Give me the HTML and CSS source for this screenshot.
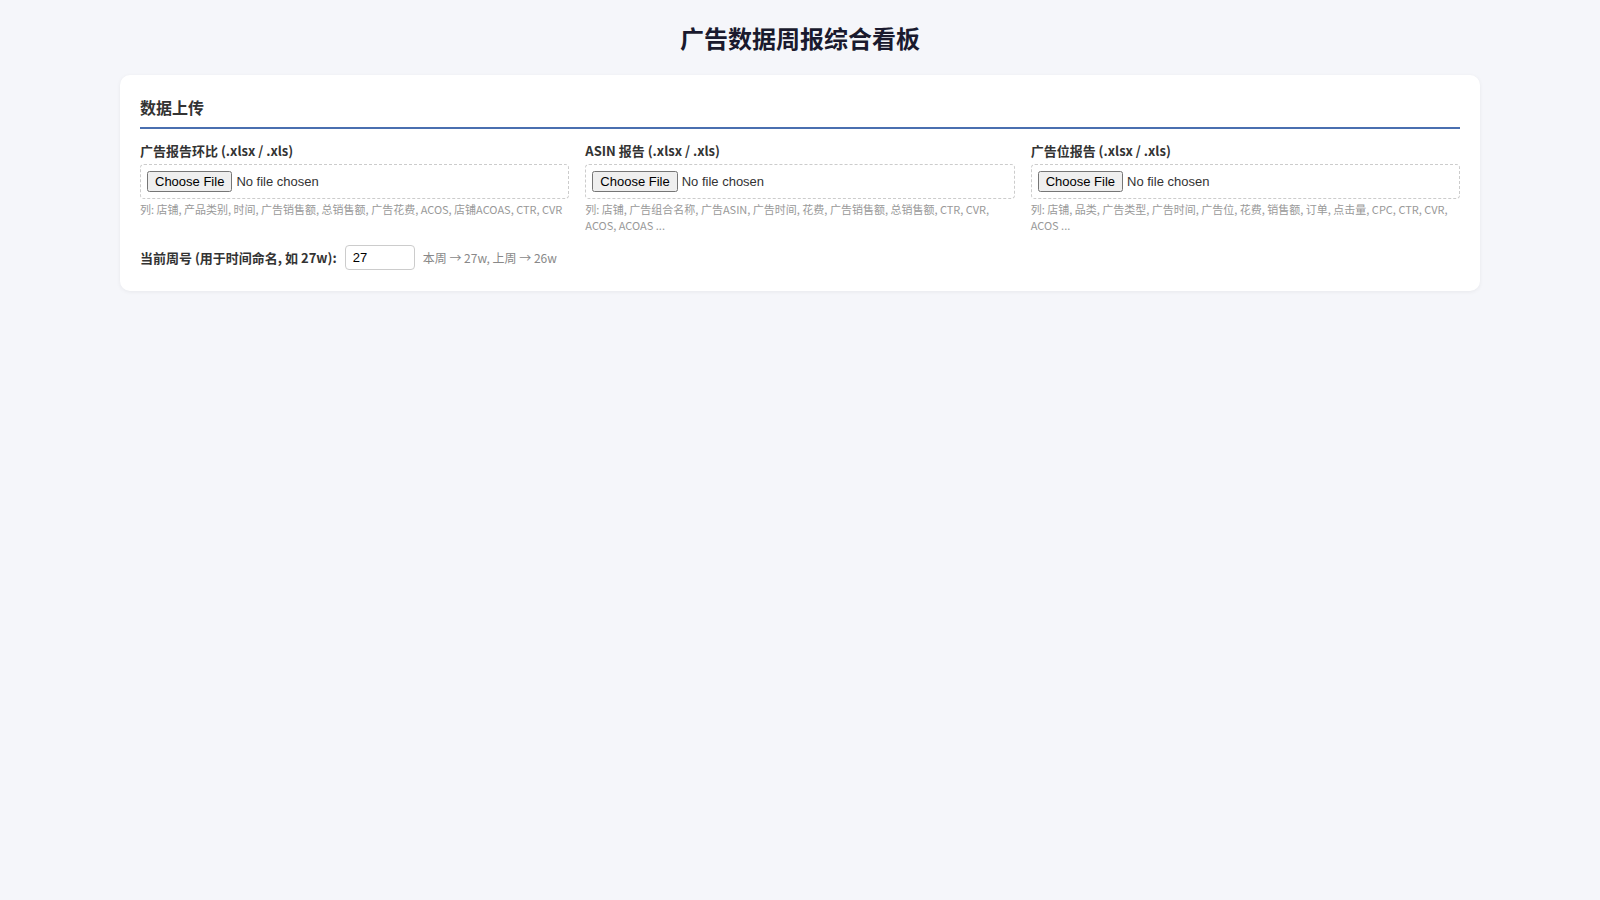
FILE: index.html
```html
<!DOCTYPE html>
<html lang="zh-CN">
<head>
  <meta charset="utf-8">
  <title>广告数据周报综合看板</title>
  <link rel="stylesheet" href="styles.css">
</head>
<body>
  <h1 class="page-title">广告数据周报综合看板</h1>

  <div class="card">
    <h2 class="card-title">数据上传</h2>

    <div class="upload-grid">
      <div class="upload-item">
        <label class="upload-label">广告报告环比 (.xlsx / .xls)</label>
        <div class="file-box"><input type="file" accept=".xlsx,.xls"></div>
        <div class="hint">列: 店铺, 产品类别, 时间, 广告销售额, 总销售额, 广告花费, ACOS, 店铺ACOAS, CTR, CVR</div>
      </div>
      <div class="upload-item">
        <label class="upload-label">ASIN 报告 (.xlsx / .xls)</label>
        <div class="file-box"><input type="file" accept=".xlsx,.xls"></div>
        <div class="hint">列: 店铺, 广告组合名称, 广告ASIN, 广告时间, 花费, 广告销售额, 总销售额, CTR, CVR, ACOS, ACOAS ...</div>
      </div>
      <div class="upload-item">
        <label class="upload-label">广告位报告 (.xlsx / .xls)</label>
        <div class="file-box"><input type="file" accept=".xlsx,.xls"></div>
        <div class="hint">列: 店铺, 品类, 广告类型, 广告时间, 广告位, 花费, 销售额, 订单, 点击量, CPC, CTR, CVR, ACOS ...</div>
      </div>
    </div>

    <div class="week-row">
      <label class="week-label">当前周号 (用于时间命名, 如 27w):</label>
      <input class="week-input" type="number" value="27">
      <span class="week-hint">本周 → 27w, 上周 → 26w</span>
    </div>
  </div>
</body>
</html>
```

FILE: styles.css
```css
body {
    margin: 0;
    padding: 20px;
    background-color: #f5f6fa;
    color: #333;
    font-family: "Noto Sans CJK SC", "Noto Sans", sans-serif;
}

.page-title {
    margin: 0 0 19px;
    font-size: 24px;
    line-height: 36px;
    font-weight: 700;
    text-align: center;
    color: #1a1a2e;
}

.card {
    max-width: 1320px;
    margin: 0 auto;
    padding: 20px 20px 21px;
    background-color: #fff;
    border-radius: 10px;
    box-shadow: 0 1px 4px rgba(0, 0, 0, 0.06);
}

.card-title {
    margin: 0 0 12px;
    padding-bottom: 8px;
    font-size: 16px;
    line-height: 24px;
    font-weight: 700;
    color: #333;
    border-bottom: 2px solid #4a6fb0;
}

.upload-grid {
    display: grid;
    grid-template-columns: repeat(3, 1fr);
    gap: 16px;
}

.upload-label {
    display: block;
    margin-bottom: 3px;
    font-size: 13px;
    line-height: 20px;
    font-weight: 700;
    color: #333;
}

.file-box {
    padding: 6px;
    border: 1px dashed #ccc;
    border-radius: 4px;
}

.file-box >input {
    display: block;
    font-size: 13px;
}

.hint {
    margin-top: 2px;
    font-size: 11px;
    line-height: 16px;
    color: #999;
}

.week-row {
    display: flex;
    align-items: center;
    gap: 8px;
    margin-top: 12px;
}

.week-label {
    font-size: 13px;
    font-weight: 700;
    color: #333;
}

.week-input {
    width: 54px;
    height: 17px;
    padding: 3px 7px;
    border: 1px solid #ccc;
    border-radius: 4px;
    font-size: 13px;
}

.week-hint {
    font-size: 12px;
    color: #888;
}
```
